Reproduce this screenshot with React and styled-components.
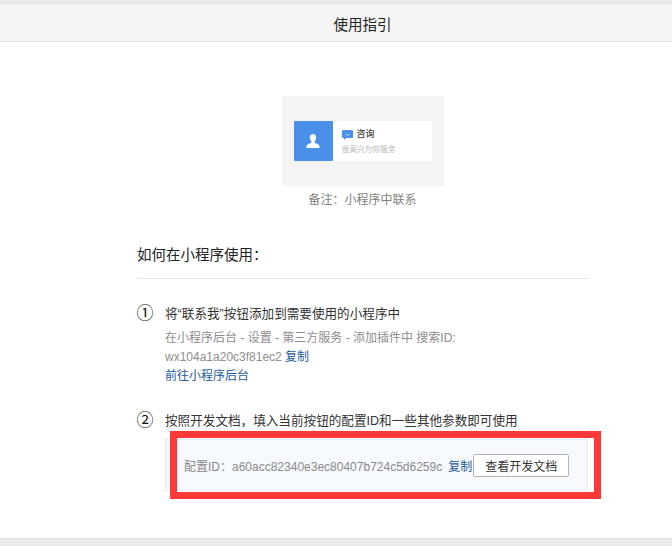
import React from "react";
import styled, { createGlobalStyle } from "styled-components";

const Global = createGlobalStyle`
  html, body { margin: 0; padding: 0; background: #fff; }
  body { font-family: "Liberation Sans", "Noto Sans CJK SC", sans-serif; }
`;
const Page = styled.div`
  position: relative;
  width: 672px;
  height: 546px;
  overflow: hidden;
  background: #e9eaec;
  padding-top: 5px;
  box-sizing: border-box;
`;
const Panel = styled.div`
  background: #fff;
  width: 725px;
  height: 534px;
  border-bottom: 1px solid #dcdcdc;
  box-sizing: border-box;
`;
const Header = styled.header`
  height: 37px;
  background: #f4f4f4;
  border-bottom: 1px solid #e2e2e2;
  display: flex;
  align-items: center;
  justify-content: center;
  font-size: 14.5px;
  color: #222;
  box-sizing: border-box;
`;
const Preview = styled.section`
  display: flex;
  flex-direction: column;
  align-items: center;
  padding-top: 54px;
`;
const PreviewFrame = styled.div`
  width: 162px;
  height: 90px;
  background: #f4f4f4;
  border-radius: 2px;
  display: flex;
  align-items: center;
  justify-content: center;
`;
const ContactCard = styled.div`
  width: 138px;
  height: 40px;
  background: #fff;
  display: flex;
`;
const Avatar = styled.div`
  width: 39px;
  height: 40px;
  background: #4a90e9;
  border-radius: 1px;
  display: flex;
  align-items: center;
  justify-content: center;
`;
const CardBody = styled.div`
  padding: 8px 0 0 9px;
  display: flex;
  flex-direction: column;
  gap: 5px;
`;
const CardTitle = styled.div`
  display: flex;
  align-items: center;
  gap: 4px;
  font-size: 9px;
  line-height: 11px;
  font-weight: 500;
  color: #444;
`;
const CardSub = styled.div`
  font-size: 7.7px;
  line-height: 9px;
  color: #b5b5b5;
`;
const Caption = styled.div`
  margin-top: 7px;
  font-size: 12px;
  line-height: 14px;
  color: #808080;
`;
const Content = styled.section`
  width: 451px;
  margin-left: 137px;
`;
const Title = styled.h2`
  margin: 38px 0 0;
  padding-bottom: 13px;
  border-bottom: 1px solid #e5e5e5;
  font-size: 14.5px;
  line-height: 20px;
  font-weight: 400;
  color: #222;
`;
const Step = styled.div`
  display: flex;
  margin-top: ${(p) => p.$top}px;
`;
const Num = styled.span`
  width: 16px;
  height: 18px;
  margin-right: 12px;
  flex: none;
  display: flex;
  align-items: center;
  justify-content: center;
  font-size: 17px;
  line-height: 18px;
  color: #111;
`;
const StepBody = styled.div`
  flex: 1;
  min-width: 0;
`;
const StepTitle = styled.div`
  font-size: 12.6px;
  line-height: 18px;
  color: #333;
`;
const Desc = styled.div`
  margin-top: 6px;
  font-size: 12px;
  line-height: 19px;
  color: #8d8d8d;
`;
const Link = styled.a`
  color: #1c5a9e;
  text-decoration: none;
`;
const ConfigBox = styled.div`
  margin: 9px 0 0 0;
  height: 52px;
  background: #f6f9fd;
  border: 1px solid #e4ebf2;
  box-sizing: border-box;
  display: flex;
  align-items: center;
  padding-left: 18px;
  font-size: 12px;
  color: #8a8a8a;
  white-space: nowrap;
`;
const ConfigLink = styled(Link)`
  margin-left: 6px;
`;
const DocButton = styled.button`
  width: 96px;
  height: 23px;
  padding: 0;
  margin-left: 1px;
  background: #fff;
  border: 1px solid #b4b4b4;
  border-radius: 2px;
  font: inherit;
  color: #333;
`;
const Highlight = styled.div`
  position: absolute;
  left: 170px;
  top: 431px;
  width: 431px;
  height: 68px;
  border: 7px solid #ff3838;
  box-sizing: border-box;
  pointer-events: none;
`;

export default function App() {
  return (
    <Page>
      <Global />
      <Panel>
        <Header>使用指引</Header>
        <Preview>
          <PreviewFrame>
            <ContactCard>
              <Avatar>
                <svg width="14" height="16" viewBox="0 0 14 16">
                  <path fill="#fff" d="M7 1c2 0 3.2 1.5 3.2 3.6 0 1.7-.7 3-1.5 3.8v1.4c1.2.7 4.3 1.4 4.8 3.2V15H.5v-2c.5-1.8 3.600-2.500 4.800-3.200V8.400C4.500 7.600 3.800 6.300 3.800 4.600 3.800 2.500 5 1 7 1z" />
                </svg>
              </Avatar>
              <CardBody>
                <CardTitle>
                  <svg width="11" height="10" viewBox="0 0 11 10">
                    <path fill="#4a90e9" d="M1 0h9a1 1 0 0 1 1 1v6a1 1 0 0 1-1 1H4L2 10V8H1a1 1 0 0 1-1-1V1a1 1 0 0 1 1-1z" />
                    <path stroke="#cfe0f7" fill="none" d="M3.500 4l2 1.500 2-1.500" />
                  </svg>
                  咨询
                </CardTitle>
                <CardSub>很高兴为你服务</CardSub>
              </CardBody>
            </ContactCard>
          </PreviewFrame>
          <Caption>备注：小程序中联系</Caption>
        </Preview>
        <Content>
          <Title>如何在小程序使用：</Title>
          <Step $top={26}>
            <Num>①</Num>
            <StepBody>
              <StepTitle>将“联系我”按钮添加到需要使用的小程序中</StepTitle>
              <Desc>
                在小程序后台 - 设置 - 第三方服务 - 添加插件中 搜索ID:
                <br />
                wx104a1a20c3f81ec2 <Link>复制</Link>
                <br />
                <Link>前往小程序后台</Link>
              </Desc>
            </StepBody>
          </Step>
          <Step $top={26}>
            <Num>②</Num>
            <StepBody>
              <StepTitle>按照开发文档，填入当前按钮的配置ID和一些其他参数即可使用</StepTitle>
              <ConfigBox>
                配置ID：a60acc82340e3ec80407b724c5d6259c
                <ConfigLink>复制</ConfigLink>
                <DocButton>查看开发文档</DocButton>
              </ConfigBox>
            </StepBody>
          </Step>
        </Content>
      </Panel>
      <Highlight />
    </Page>
  );
}
